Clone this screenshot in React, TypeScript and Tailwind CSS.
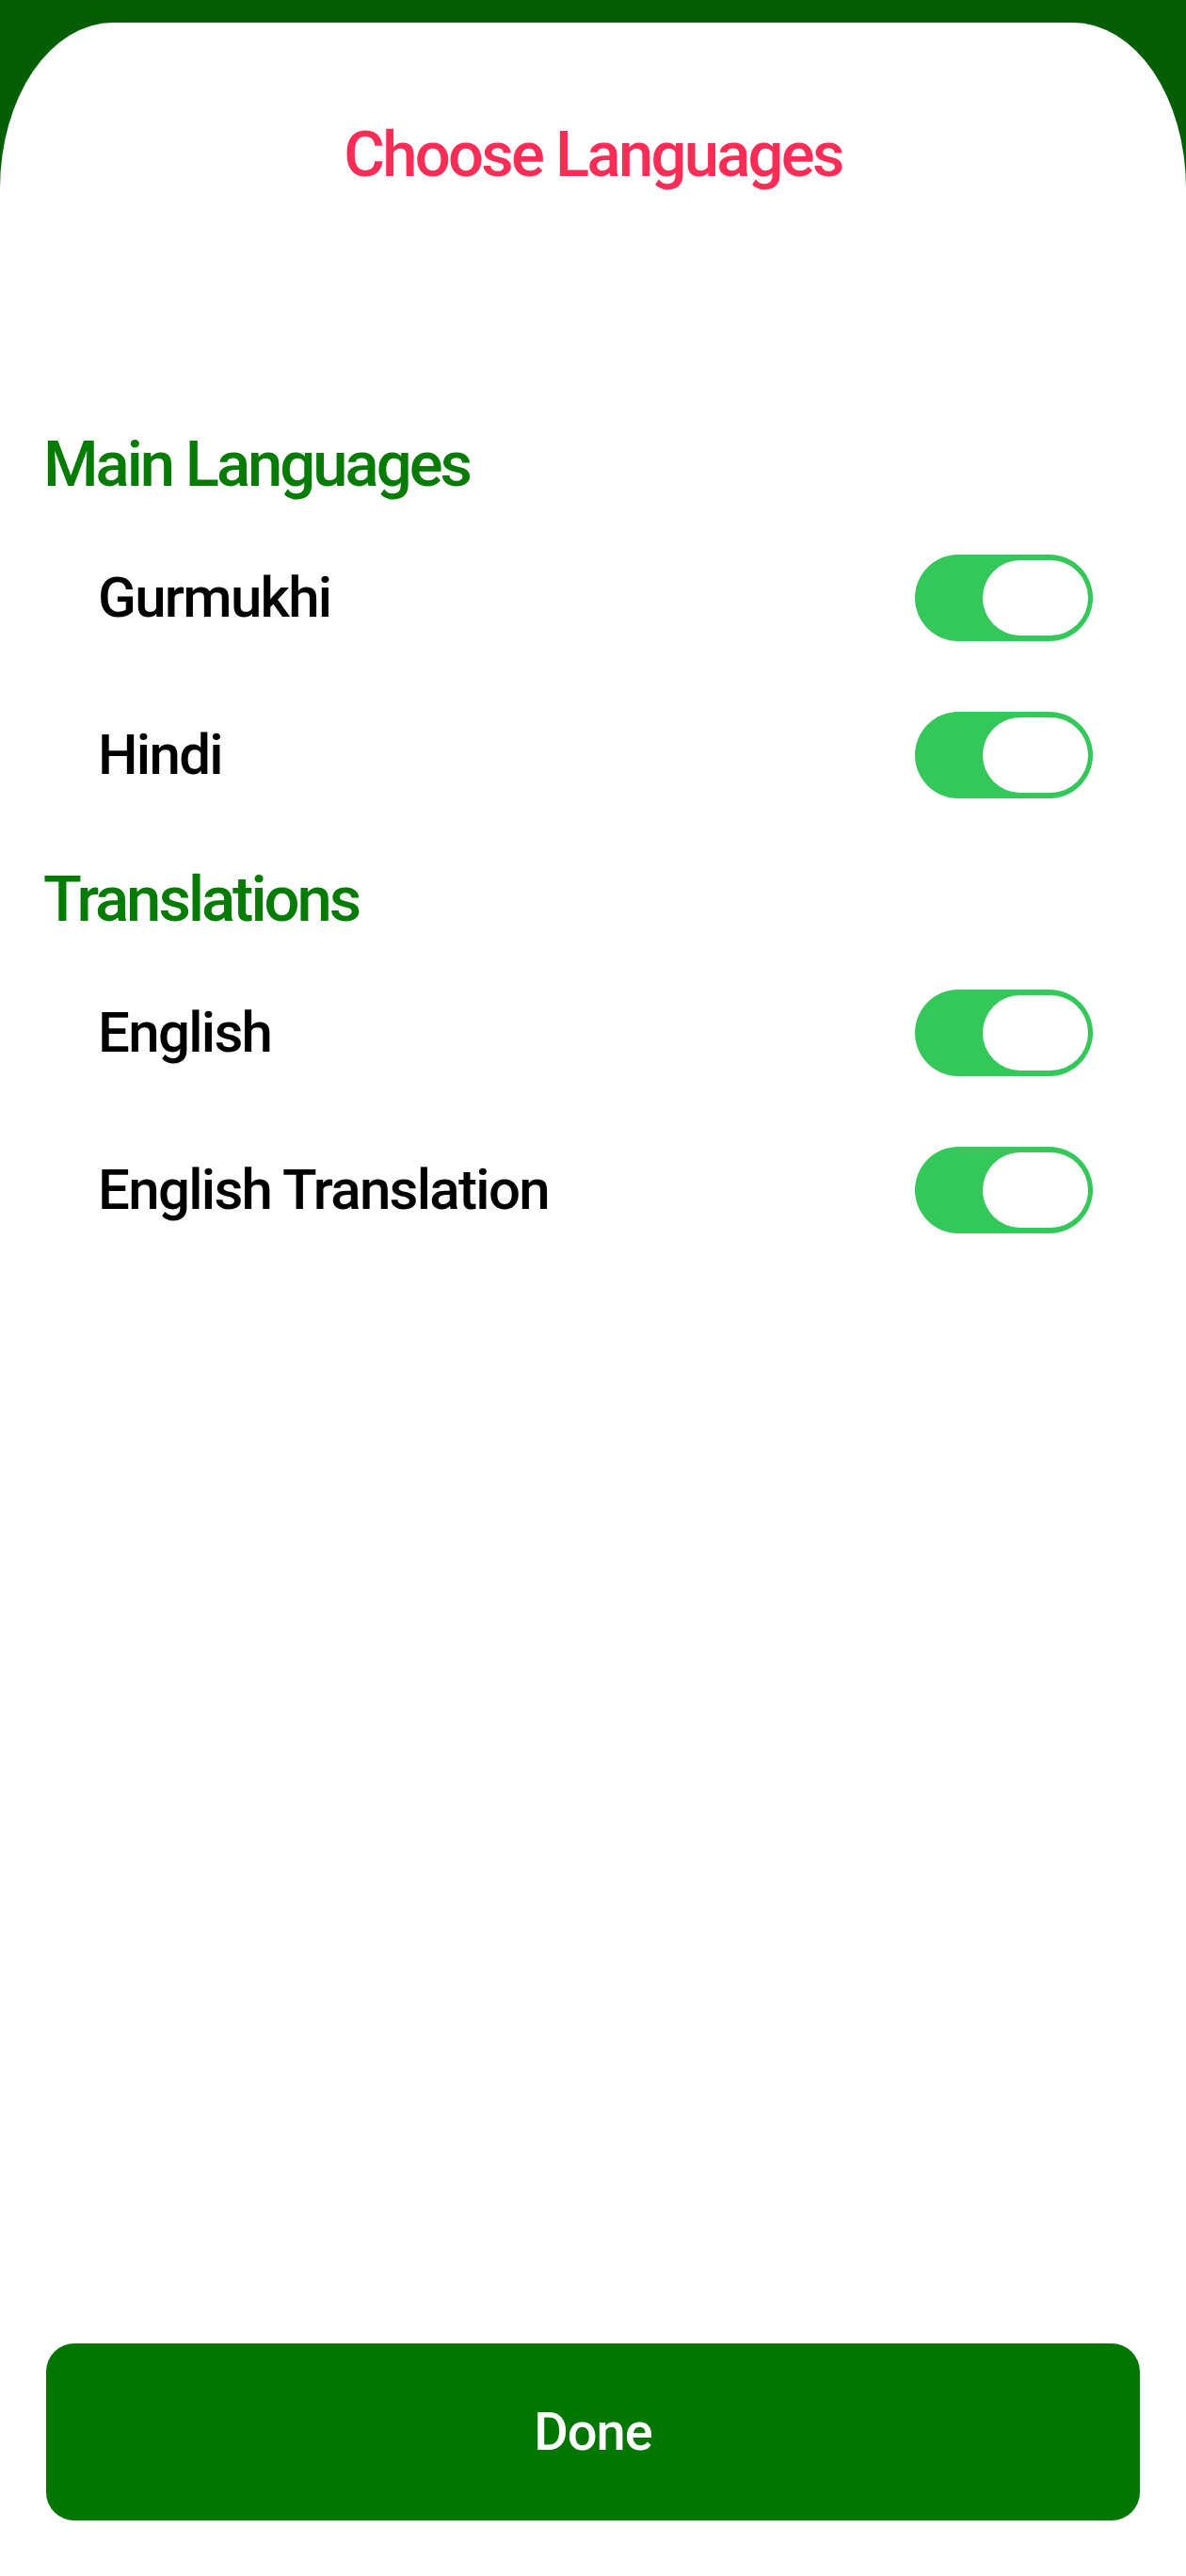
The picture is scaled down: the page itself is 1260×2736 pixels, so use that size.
import React from "react";

function Toggle() {
  return (
    <div className="relative w-[189px] h-[92px] rounded-full bg-[#34c759] shrink-0">
      <div className="absolute right-[5px] top-[6px] w-[112px] h-[80px] rounded-full bg-white" />
    </div>
  );
}

function Row({ label }: { label: string }) {
  return (
    <div className="h-[167px] flex items-center justify-between pl-[104px] pr-[99px]">
      <span className="text-[60px] leading-none font-medium text-black tracking-[-1.7px]">{label}</span>
      <Toggle />
    </div>
  );
}

function Header({ label }: { label: string }) {
  return (
    <div className="h-[115px] flex items-center pl-[46px]">
      <span className="text-[67px] leading-none font-medium text-[#047c04] tracking-[-3px]">{label}</span>
    </div>
  );
}

export default function App() {
  return (
    <div
      className="w-[1260px] h-[2736px] bg-[#045e04] pt-[24px] overflow-hidden"
      style={{ fontFamily: "Roboto, 'Noto Sans', sans-serif" }}
    >
      <div className="h-[2712px] bg-white rounded-tl-[120px_176px] rounded-tr-[120px_176px] flex flex-col">
        <div className="h-[280px] flex items-center justify-center">
          <h1 className="text-[67px] leading-none font-medium text-[#fb2d56] tracking-[-2.75px]">
            Choose Languages
          </h1>
        </div>
        <div className="h-[132px]" />
        <section>
          <Header label="Main Languages" />
          <Row label="Gurmukhi" />
          <Row label="Hindi" />
        </section>
        <section className="mt-[13px]">
          <Header label="Translations" />
          <Row label="English" />
          <Row label="English Translation" />
        </section>
        <div className="flex-1" />
        <div className="px-[49px] pb-[59px]">
          <button className="w-full h-[188px] rounded-[30px] bg-[#017701] flex items-center justify-center">
            <span className="text-[56px] leading-none font-medium text-white tracking-[-1px]">Done</span>
          </button>
        </div>
      </div>
    </div>
  );
}
